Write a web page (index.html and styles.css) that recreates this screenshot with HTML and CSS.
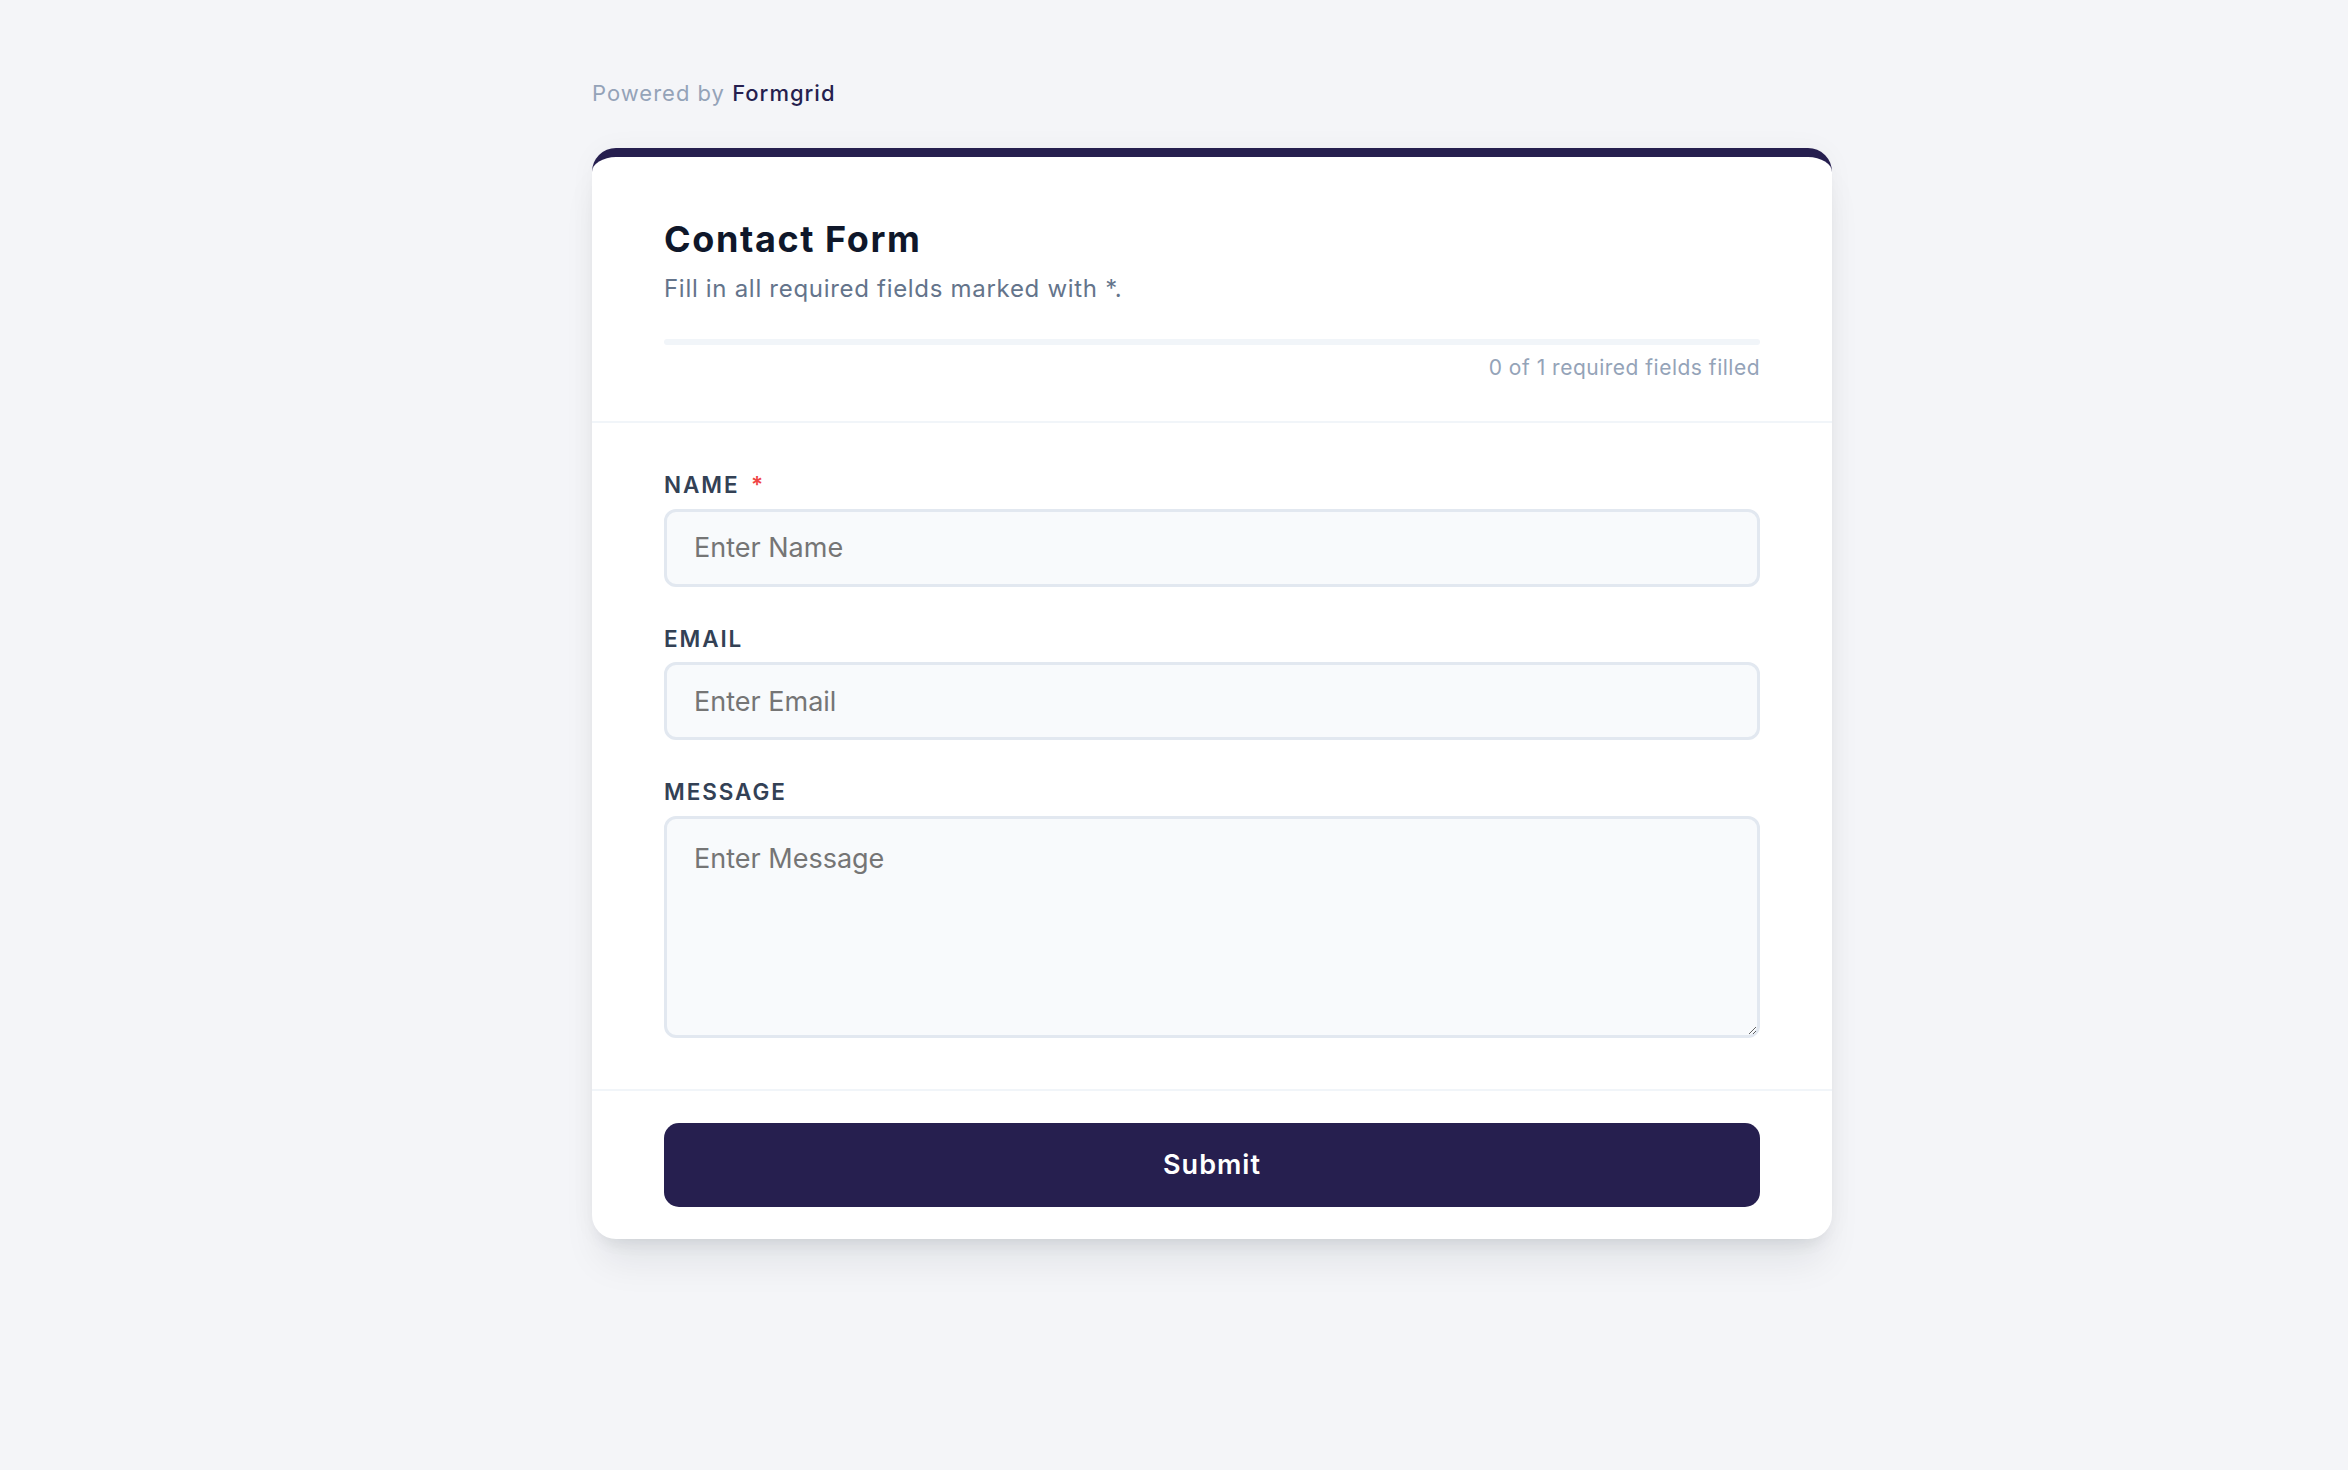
FILE: index.html
```html
<!DOCTYPE html>
<html lang="en">
<head>
<meta charset="utf-8">
<title>Contact Form</title>
<link rel="stylesheet" href="styles.css">
</head>
<body>
<main class="page">
  <p class="powered">Powered by <span class="brand">Formgrid</span></p>
  <form class="card">
    <header class="card-header">
      <h1 class="title">Contact Form</h1>
      <p class="subtitle">Fill in all required fields marked with *.</p>
      <div class="progress"><div class="progress-fill" style="width:0%"></div></div>
      <p class="progress-text">0 of 1 required fields filled</p>
    </header>
    <section class="fields">
      <div class="field">
        <label class="label" for="name">Name <span class="req">*</span></label>
        <input class="input" id="name" type="text" placeholder="Enter Name">
      </div>
      <div class="field">
        <label class="label" for="email">Email</label>
        <input class="input" id="email" type="email" placeholder="Enter Email">
      </div>
      <div class="field">
        <label class="label" for="message">Message</label>
        <textarea class="input textarea" id="message" placeholder="Enter Message"></textarea>
      </div>
    </section>
    <footer class="card-footer">
      <button class="submit" type="button">Submit</button>
    </footer>
  </form>
</main>
</body>
</html>
```
FILE: styles.css
```css
* { box-sizing: border-box; }
html, body { margin: 0; padding: 0; }
body {
  background: #f4f5f8;
  font-family: Inter, "Noto Sans", "Liberation Sans", sans-serif;
  color: #0f172a;
  min-height: 1470px;
}
.page {
  width: 1240px;
  margin-left: 592px;
  padding-top: 77px;
}
.powered {
  margin: 0 0 38px 0;
  font-size: 22px;
  line-height: 33px;
  letter-spacing: 1px;
  color: #94a3b8;
}
.brand {
  color: #261f4f;
  font-weight: 500;
}
.card {
  background: #ffffff;
  border-top: 9px solid #261f4f;
  border-radius: 24px;
  box-shadow: 0 30px 38px -8px rgba(15, 23, 42, 0.08), 0 12px 16px -9px rgba(15, 23, 42, 0.08), 0 0 28px rgba(15, 23, 42, 0.035);
}
.card-header {
  padding: 60px 72px 37.5px;
  border-bottom: 2px solid #f1f5f9;
}
.title {
  margin: 0;
  font-size: 36px;
  line-height: 45px;
  font-weight: 700;
  letter-spacing: 1.6px;
  color: #0f172a;
}
.subtitle {
  margin: 9px 0 0 0;
  font-size: 24px;
  line-height: 36px;
  letter-spacing: 0.7px;
  color: #64748b;
}
.progress {
  margin-top: 32px;
  height: 6px;
  border-radius: 3px;
  background: #f1f5f9;
  overflow: hidden;
}
.progress-fill {
  height: 100%;
  background: #261f4f;
}
.progress-text {
  margin: 7px 0 0 0;
  text-align: right;
  font-size: 21px;
  line-height: 31.5px;
  letter-spacing: 0.5px;
  color: #94a3b8;
}
.fields {
  padding: 46px 72px 51px;
  border-bottom: 2px solid #f1f5f9;
  display: flex;
  flex-direction: column;
  gap: 36px;
}
.field {
  display: flex;
  flex-direction: column;
  gap: 8px;
}
.label {
  font-size: 22.5px;
  line-height: 31.5px;
  font-weight: 600;
  text-transform: uppercase;
  letter-spacing: 1.9px;
  color: #334155;
}
.req {
  color: #ef4444;
  margin-left: 4px;
}
.input {
  display: block;
  width: 100%;
  height: 78px;
  padding: 18px 24px 18px 27px;
  border: 3px solid #e2e8f0;
  border-radius: 12px;
  background: #f8fafc;
  font-family: Inter, "Noto Sans", "Liberation Sans", sans-serif;
  font-size: 27px;
  line-height: 36px;
  color: #0f172a;
  outline: none;
}
.input::placeholder {
  color: #757575;
}
.textarea {
  height: 222px;
  padding-top: 22px;
  resize: vertical;
}
.card-footer {
  padding: 32px 72px;
}
.submit {
  display: block;
  width: 100%;
  height: 84px;
  border: none;
  border-radius: 15px;
  background: #261f4f;
  color: #ffffff;
  font-family: Inter, "Noto Sans", "Liberation Sans", sans-serif;
  font-size: 27px;
  font-weight: 600;
  letter-spacing: 1px;
  cursor: pointer;
}
```
